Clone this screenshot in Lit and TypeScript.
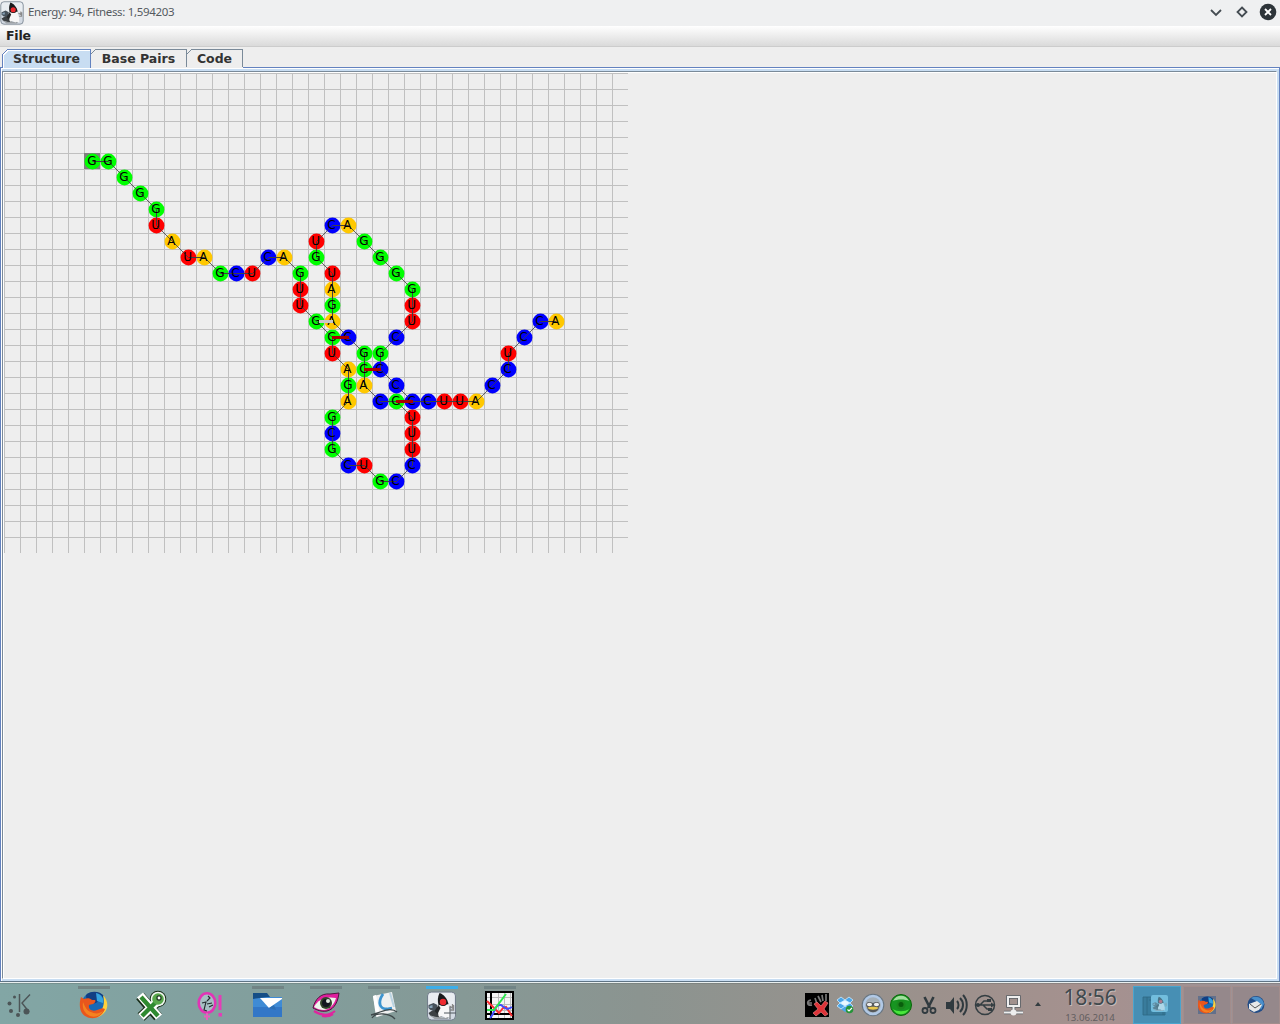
import { LitElement, html, svg, css } from "lit";
import { customElement, state } from "lit/decorators.js";

const CELL = 16;
const COLS = 39;
const ROWS = 30;

const COLORS: Record<string, string> = { G: "#00ff00", U: "#ff0000", A: "#ffc800", C: "#0000ff" };

// Folded chain: base letter, column, row
const CHAIN: [string, number, number][] = [
  ["G", 5, 5], ["G", 6, 5], ["G", 7, 6], ["G", 8, 7], ["G", 9, 8], ["U", 9, 9], ["A", 10, 10], ["U", 11, 11],
  ["A", 12, 11], ["G", 13, 12], ["C", 14, 12], ["U", 15, 12], ["C", 16, 11], ["A", 17, 11], ["G", 18, 12],
  ["U", 18, 13], ["U", 18, 14], ["G", 19, 15], ["G", 20, 16], ["U", 20, 17], ["A", 21, 18], ["G", 21, 19],
  ["A", 21, 20], ["G", 20, 21], ["C", 20, 22], ["G", 20, 23], ["C", 21, 24], ["U", 22, 24], ["G", 23, 25],
  ["C", 24, 25], ["C", 25, 24], ["U", 25, 23], ["U", 25, 22], ["U", 25, 21], ["G", 24, 20], ["C", 23, 20],
  ["A", 22, 19], ["G", 22, 18], ["G", 22, 17], ["C", 21, 16], ["A", 20, 15], ["G", 20, 14], ["A", 20, 13],
  ["U", 20, 12], ["G", 19, 11], ["U", 19, 10], ["C", 20, 9], ["A", 21, 9], ["G", 22, 10], ["G", 23, 11],
  ["G", 24, 12], ["G", 25, 13], ["U", 25, 14], ["U", 25, 15], ["C", 24, 16], ["G", 23, 17], ["C", 23, 18],
  ["C", 24, 19], ["C", 25, 20], ["C", 26, 20], ["U", 27, 20], ["U", 28, 20], ["A", 29, 20], ["C", 30, 19],
  ["C", 31, 18], ["U", 31, 17], ["C", 32, 16], ["C", 33, 15], ["A", 34, 15],
];

// Bonds between paired bases: x and y on the grid, length, colour
const BONDS: [number, number, number, string][] = [
  [315, 247, 14, "#c8c8c8"], [328, 263, 17, "#a80000"], [360, 295, 17, "#a80000"], [392, 327, 17, "#a80000"],
];

const duke = svg`
  <path d="M3 23l6-4 6 1 4 5-6 3-8-2z" fill="#3c4043"/><path d="M4 25c5 2 10 3 19 2l3-3-4 5H9z" fill="#9ba0a4"/>
  <path d="M3 15l5-2 4 2-1 6-6-1-2-2z" fill="#46515a"/><path d="M4 16l3-1 0 3-3 0z" fill="#87a3b8"/>
  <path d="M14 3c4 1 8 6 9 11l-4 3-6-2c-1-4-1-8 1-12z" fill="#191b1d"/>
  <path d="M14 15c3 2 6 1 8-1l3 8 0 6-3-1-2 1-3-2-3 1-1-1c-1-4 0-8 1-11z" fill="#f7f7f7"/>
  <path d="M13 15l-4 6 3 3 3-6z" fill="#26292b"/>
  <path d="M24 16l3 2 0-4M25 20l3 0 0-5" stroke="#888" stroke-width="1.300" fill="none"/>
  <circle cx="17.500" cy="12" r="3.200" fill="#ee2a30"/>`;

const firefox = svg`
  <circle cx="16" cy="14.500" r="12.500" fill="#1769b5"/><path d="M8 5c5-5 14-4 18 1l-8 7-9 2z" fill="#123e83"/><path d="M18 3c5 1 8 5 7 10l-6-2z" fill="#35a3df"/>
  <path d="M25 5c5 5 6 13 1 18-5 6-14 6-19 1l8 0c8 1 13-8 10-19z" fill="#ffd13b"/>
  <path d="M3 7l3 2c3-1 6-1 8 1l3 0c1 1 0 3-2 4l-4 1c-1 4 3 7 8 5 3-1 5-3 8-1-3 8-12 12-20 7C1 22 1 13 3 7z" fill="#e8561d"/>
  <path d="M5 12c-1 6 1 11 7 14 6 2 11-1 13-5-4 3-8 3-12 1-4-1-6-5-8-10z" fill="#f58220"/>`;

const kde = svg`<g fill="#4c5557"><circle cx="8.500" cy="7" r="1.500"/><circle cx="3.500" cy="13.500" r="2"/><circle cx="5" cy="21" r="2"/><circle cx="12" cy="25" r="2"/><circle cx="20.500" cy="21.500" r="3"/></g>
  <path d="M13.500 4v18" stroke="#4c5557" stroke-width="1.500"/><path d="M24 4.500l-8 8.500 7 9" stroke="#4c5557" stroke-width="1.400" fill="none"/>`;

const greenX = svg`<path d="M4 6L22 27M22 11L5 27" stroke="#182d18" stroke-width="10"/><circle cx="22" cy="9" r="8.300" fill="#182d18"/>
  <path d="M4 5L23 27M22 11L5 27" stroke="#fff" stroke-width="8"/><circle cx="22" cy="9" r="7.300" fill="#f4f8f4"/>
  <path d="M5 7L22 26M20 12L6 26" stroke="#2f8a30" stroke-width="4.400"/><circle cx="22" cy="9" r="5.800" fill="#58a84b"/><circle cx="23" cy="8" r="2.700" fill="#203b23"/><circle cx="23" cy="8" r="1.400" fill="#fff"/>`;

const pinkQ = svg`<ellipse cx="13" cy="13" rx="8.300" ry="9.800" fill="#a6bfc3" stroke="#e134b5" stroke-width="2.600"/>
  <path d="M13 23v7M10 26.500h6" stroke="#e560bd" stroke-width="2"/><path d="M26 5v15" stroke="#e43db8" stroke-width="3"/><path d="M24.500 23h3.500v3.500h-3.500z" fill="#e43db8"/>
  <path d="M14 6l2 2-3 3M8 13l4-1-2 8 3 1M13 14l5-1M15 17l4-2" stroke="#242b2e" stroke-width="1.100" fill="none"/>`;

const folder = svg`<path d="M1 3h14l3 4h12v9H1z" fill="#154e86"/><path d="M1 9l14-2h15v20H1z" fill="#3f8bd5"/><path d="M1 17h29v10H1z" fill="#3277c7"/><path d="M8 8l22 0 0 1-13 9z" fill="#fff"/><path d="M17 18l5-3 2 5z" fill="#2b6fb5"/>`;

const eye = svg`<path d="M3 18C5 9 11 3 20 4l9-1c-1 8-4 16-12 18-6 1-10-1-14-3z" fill="#e01f9d" stroke="#4b183d"/>
  <path d="M4 17C8 9 16 6 26 8c-2 7-6 11-12 12-4 0-7-1-10-3z" fill="#eef6ed"/><circle cx="16" cy="13" r="6" fill="#31452b"/><circle cx="16" cy="13" r="4" fill="#10151e"/><circle cx="18" cy="11" r="2" fill="#dce8de"/>
  <path d="M4 21c8 5 15 5 21 0M12 26c5 1 8 0 11-2" stroke="#df259e" stroke-width="2.200" fill="none"/>`;

const okular = svg`<path d="M5 6L24 2l4 19-19 6z" fill="#eff0f0"/><path d="M5 6L8 5l4 20-4 2z" fill="#fff"/>
  <path d="M15 4c-6 9-3 15 4 15l5-1" stroke="#3d94cf" stroke-width="2.800" fill="none"/><path d="M22 3l4 14" stroke="#b9d3e2" stroke-width="2" fill="none"/>
  <path d="M3 25c8-2 19-9 26-3M4 28c4-6 18-5 23 1" stroke="#3f494b" stroke-width="1.300" fill="none"/>`;

const java = svg`<rect x="2" y="2" width="28" height="28" rx="4" fill="#d3dae3" stroke="#727d8a"/><rect x="3" y="3" width="26" height="14" rx="3" fill="#e9edf1"/>${duke}`;

const plot = svg`<rect x="2" y="2" width="27" height="27" fill="#f5f5f5" stroke="#000" stroke-width="2"/><path d="M14.500 3v25M20.500 3v25M26.500 3v25M3 7.500h25M3 14.500h25M3 20.500h25" stroke="#bbb"/>
  <path d="M7 3v25M3 24h25" stroke="#000" stroke-width="2"/><path d="M3 11l12 12 4-5 3-1 6 9" stroke="#ff2e33" stroke-width="2" fill="none"/><path d="M6 28c5-4 4-14 11-13 5 4 6 5 11 2" stroke="#414cff" stroke-width="2" fill="none"/><path d="M3 20h7L22 4" stroke="#2de84e" stroke-width="2" fill="none"/>`;

const LAUNCHERS = [
  { icon: firefox, bar: "open" }, { icon: greenX, bar: "" }, { icon: pinkQ, bar: "" }, { icon: folder, bar: "open" },
  { icon: eye, bar: "open" }, { icon: okular, bar: "open" },
  { icon: svg`<g transform="translate(-.5,0)">${java}</g><path d="M24 17v12M18 23h12" stroke="#4f575d" stroke-width="1"/>`, bar: "active" },
  { icon: plot, bar: "open" },
];

// Tray icons share a 24x24 box
const TRAY = [
  svg`<path d="M0 0h24v24H0z" fill="#000"/><path d="M6 7c-5 1-4 6 1 5M2 10h5M13 3l3 6M17 2l1 6M21 1v7M10 5l2 6" stroke="#777" stroke-width="1.700" fill="none"/><path d="M9 11l3-2 4 4 4-5 3 2-4 6 4 5-3 2-4-4-5 4-3-3 5-4z" fill="#dd3338" stroke="#f08c8c" stroke-width=".6"/>`,
  svg`<path d="M4 7l4-3 4 3 4-3 4 3-3 3 3 3-8 6-8-6 3-3z" fill="#4aa5e8"/><path d="M12 7l5 3-5 3-5-3z" fill="#e9f7ff"/><path d="M4 7l4-3 4 3-5 3zM12 7l4-3 4 3-3 3zM7 10l5 3-4 3-4-3zM12 13l5-3 3 3-4 3z" fill="none" stroke="#d1edff" stroke-width=".8"/><circle cx="16.500" cy="16.500" r="3.800" fill="#249438"/><path d="M14.500 16.500l1.500 1.500 3-3" stroke="#fff" fill="none" stroke-width="1.200"/>`,
  svg`<circle cx="12" cy="12" r="10.800" fill="#b1c9e6" stroke="#687580" stroke-width="1.100"/><circle cx="12" cy="12" r="7.800" fill="#a5b0b9"/><path d="M5 12c1-4 4-3 7-2 3-1 6-2 7 2l-2 5c-3 3-7 3-10 0z" fill="#55585a"/><ellipse cx="8.500" cy="11.500" rx="2.600" ry="1.700" fill="#eee"/><ellipse cx="15.500" cy="11.500" rx="2.600" ry="1.700" fill="#eee"/><path d="M6.500 14.500c3-1 8-1 11 0-1 3-10 3-11 0z" fill="#e9c74c"/>`,
  svg`<circle cx="12" cy="12" r="10.500" fill="#179421" stroke="#086708"/><path d="M4 8c3-7 13-7 16 0-4-2-12-2-16 0z" fill="#a2df9e"/><path d="M4 16c3 7 13 7 16 0-4 3-12 3-16 0z" fill="#49e63b"/><circle cx="12" cy="12" r="4.500" fill="#1b881d"/><circle cx="12" cy="11.500" r="2.500" fill="#085e0c"/>`,
  svg`<g stroke="#303a3f" fill="none"><path d="M7.500 4l5.500 11M16.500 4L11 15" stroke-width="2.600"/><circle cx="8" cy="17.500" r="2.500" stroke-width="1.800"/><circle cx="16" cy="17.500" r="2.500" stroke-width="1.800"/></g>`,
  svg`<path d="M1 9h4l4-5v17l-4-5H1z" fill="#303a3f"/><path d="M12 8c2 2 2 6 0 8M15 5c4 4 4 10 0 14M18 2c5 5 5 15 0 20" stroke="#303a3f" stroke-width="2" fill="none"/>`,
  svg`<g stroke="#343e42" fill="none" stroke-width="1.500"><circle cx="12" cy="12" r="9.500"/><path d="M3 12h17M7 12l4-4h4M10 12l4 4h3"/></g><circle cx="5" cy="12" r="2" fill="#343e42"/><path d="M18 9.500l4 2.500-4 2.500zM14 6h4v3h-4zM15 15h4v3h-4z" fill="#343e42"/>`,
  svg`<path d="M7 4h11v9H7zM12.500 13v6M3 19.500h19" stroke="#596066" stroke-width="3.600" fill="none"/><path d="M7 4h11v9H7zM12.500 13v6M3 19.500h19" stroke="#eee" stroke-width="2" fill="none"/><circle cx="12.500" cy="19.500" r="3" fill="#eee"/>`,
];

@customElement("app-root")
export class AppRoot extends LitElement {
  @state() private tab = "Structure";

  static styles = css`
    :host { display: block; width: 1280px; height: 1024px; overflow: hidden; }
    .screen { display: flex; flex-direction: column; height: 1024px; background: #eee; font-family: "DejaVu Sans", sans-serif; }
    svg { display: block; flex: none; }
    .title { display: flex; align-items: center; height: 26px; flex: none; background: #eff0f1; color: #555a5f; font: 11.500px "Noto Sans", sans-serif; }
    .caption { margin-left: 4px; flex: 1; line-height: 22px; padding-bottom: 2px; letter-spacing: -0.33px; }
    .menu { height: 20px; flex: none; display: flex; align-items: center; padding-left: 6px; background: linear-gradient(#fff, #dadada); font-size: 12.500px; font-weight: bold; color: #222; border-bottom: 1px solid #ccc; box-sizing: content-box; }
    .menu span { padding-bottom: 2px; letter-spacing: -0.2px; }
    .tabs { display: flex; height: 20px; flex: none; padding: 2px 0 0 2px; box-sizing: border-box; font-size: 12.500px; font-weight: bold; color: #333; }
    .tab { position: relative; height: 18px; display: flex; align-items: center; justify-content: center; box-sizing: border-box; border: 0; padding: 0 0 0 1px; background: none; font: inherit; color: inherit; }
    .tab svg { position: absolute; left: 0; top: 0; }
    .tab span { position: relative; white-space: nowrap; }
    .pane { flex: 1; min-height: 0; box-sizing: border-box; border: 1px solid #6382bf; border-bottom: 0; background: #c8ddf2; padding: 3px 2px 2px 1px; box-shadow: inset 1px 1px #fff; }
    .canvas { height: 100%; box-sizing: border-box; background: #eee; border: 1px solid #7a8a99; border-right-color: #fff; border-bottom-color: #fff; padding: 1px; box-shadow: inset 1px 1px #fff; }
    .base { font: 12px "DejaVu Sans", sans-serif; fill: #000; }
    .bar { height: 43px; flex: none; box-sizing: border-box; display: flex; align-items: stretch; border-top: 1px solid #5f7485; box-shadow: inset 0 1px #e9efef, inset 0 2px rgba(90,100,100,.3); background: linear-gradient(90deg, #82a6a5 0%, #829d9b 25%, #8b9490 50%, #9b918c 72%, #a6918f 86%, #9b9297 100%); }
    .kick { width: 65px; padding: 8px 0 0 6px; box-sizing: border-box; }
    .task { width: 58px; display: flex; flex-direction: column; align-items: center; padding-top: 4px; box-sizing: border-box; }
    .mark { width: 32px; height: 3px; }
    .task svg { margin-top: 1px; }
    .open { background: #718485; }
    .active { background: #3daee9; }
    .tray { display: flex; margin-left: 276px; gap: 4px; padding-top: 11px; }
    .arrow { width: 0; height: 0; border: 3px solid transparent; border-top: 0; border-bottom: 4px solid #333c40; margin: 20px 0 0 10px; }
    .clock { width: 54px; margin-left: 22px; color: #40494d; text-align: center; font-family: "Noto Sans", sans-serif; padding-top: 2px; white-space: nowrap; }
    .time { font-size: 21px; line-height: 26px; text-shadow: 1px 1px #c6b9b8; letter-spacing: -0.1px; }
    .date { font-size: 9.700px; line-height: 15px; color: #625e60; }
    .pager { display: flex; margin: 4px 0 0 16px; gap: 1px; }
    .desk { width: 48px; height: 38px; box-sizing: border-box; border: 1px solid #a28d8c; background: #95888b; display: flex; align-items: center; justify-content: center; }
    .current { background: #478fb4; border-color: #4aa4cd; margin-right: 1px; }
  `;

  private renderTab(label: string, width: number) {
    const on = this.tab === label;
    const x = width + 0.5;
    const shape = `M0.5 18.5V5.5L5.5 0.5H${x}V18.5`;
    return html`<button class="tab" style="width:${width}px" @click=${() => (this.tab = label)}>
      <svg width=${width + 1} height="19" shape-rendering="crispEdges">
        <path d=${shape} fill=${on ? "#c8ddf2" : "#eeeeee"} stroke="none"></path>
        <path d=${on ? shape : `M0.5 5.5L5.5 0.5H${x}V18`} fill="none" stroke=${on ? "#6382bf" : "#7a8a99"}></path>
        ${on ? svg`<path d="M1.5 19V6L6 1.500H${width}" fill="none" stroke="#fff"/>` : ""}
      </svg><span>${label}</span></button>`;
  }

  private renderGrid() {
    const mid = (n: number) => n * CELL + 8.5;
    return html`<svg width=${COLS * CELL} height=${ROWS * CELL}>
      ${Array.from({ length: COLS }, (_, i) => svg`<rect x=${i * CELL} y="0" width="1" height=${ROWS * CELL} fill="#c0c0c0"/>`)}
      ${Array.from({ length: ROWS }, (_, i) => svg`<rect x="0" y=${i * CELL} width=${COLS * CELL} height="1" fill="#c0c0c0"/>`)}
      <rect x="80" y="80" width="16" height="16" fill="#808080"></rect>
      ${CHAIN.map(([b, c, r]) => svg`<circle cx=${mid(c)} cy=${mid(r)} r="7.900" fill=${COLORS[b]}/>`)}
      ${CHAIN.slice(1).map(([, c, r], i) => svg`<line x1=${mid(CHAIN[i][1])} y1=${mid(CHAIN[i][2])} x2=${mid(c)} y2=${mid(r)} stroke="#404040" stroke-width=${CHAIN[i][1] !== c && CHAIN[i][2] !== r ? 0.8 : 1}/>`)}
      ${CHAIN.map(([b, c, r]) => svg`<text class="base" x=${c * CELL + 3.2} y=${r * CELL + 12}>${b}</text>`)}
      ${BONDS.map(([x, y, w, color]) => svg`<rect x=${x} y=${y} width=${w} height="3" fill=${color}/>`)}
    </svg>`;
  }

  render() {
    return html`<div class="screen">
      <div class="title">
        <svg width="24" height="24" viewBox="1 1 30 30">${java}</svg>
        <span class="caption">Energy: 94, Fitness: 1,594203</span>
        <svg width="76" height="26" fill="none" stroke="#454c52" stroke-width="1.800">
          <path d="M7 10l5 5 5-5"></path><path d="M38 7.500l4.500 4.500-4.500 4.500-4.500-4.500z"></path>
          <circle cx="64" cy="12" r="8.300" fill="#2d3439" stroke="none"></circle><path d="M61 9l6 6M67 9l-6 6" stroke="#fff"></path>
        </svg>
      </div>
      <div class="menu"><span>File</span></div>
      <div class="tabs">${this.renderTab("Structure", 88)}${this.renderTab("Base Pairs", 96)}${this.renderTab("Code", 56)}</div>
      <div class="pane"><div class="canvas">${this.renderGrid()}</div></div>
      <div class="bar">
        <div class="kick"><svg width="26" height="30">${kde}</svg></div>
        ${LAUNCHERS.map((l) => html`<div class="task"><div class="mark ${l.bar}"></div><svg width="32" height="32">${l.icon}</svg></div>`)}
        <div class="tray">${TRAY.map((icon) => html`<svg width="24" height="24">${icon}</svg>`)}</div>
        <div class="arrow"></div>
        <div class="clock"><div class="time">18:56</div><div class="date">13.06.2014</div></div>
        <div class="pager">
          <div class="desk current"><svg width="30" height="24" viewBox="0 0 30 24"><path d="M1 4h22v18H1zM5 4v18M7 7h14v15" fill="#397c9c" stroke="#2d6884" stroke-width=".8"></path><rect x="9" y="2" width="17" height="17" rx="2" fill="#72bddd"></rect><g transform="translate(9,2) scale(.55)" opacity=".45">${duke}</g></svg></div>
          <div class="desk"><svg width="18" height="18" viewBox="2 1 28 28"><path d="M2 1h28v28H2z" fill="#62708b"></path>${firefox}</svg></div>
          <div class="desk"><svg width="18" height="18"><circle cx="9" cy="8.500" r="8.500" fill="#214c87"></circle><path d="M4 2c6-3 12 0 13 6l-3 6-5-9z" fill="#4a8fca"></path><path d="M2 8l8-3 5 4-3 5-5 2-5-3z" fill="#e8e9e8"></path><path d="M3 8l5 4 6-4" stroke="#555" fill="none"></path></svg></div>
        </div>
      </div>
    </div>`;
  }
}
